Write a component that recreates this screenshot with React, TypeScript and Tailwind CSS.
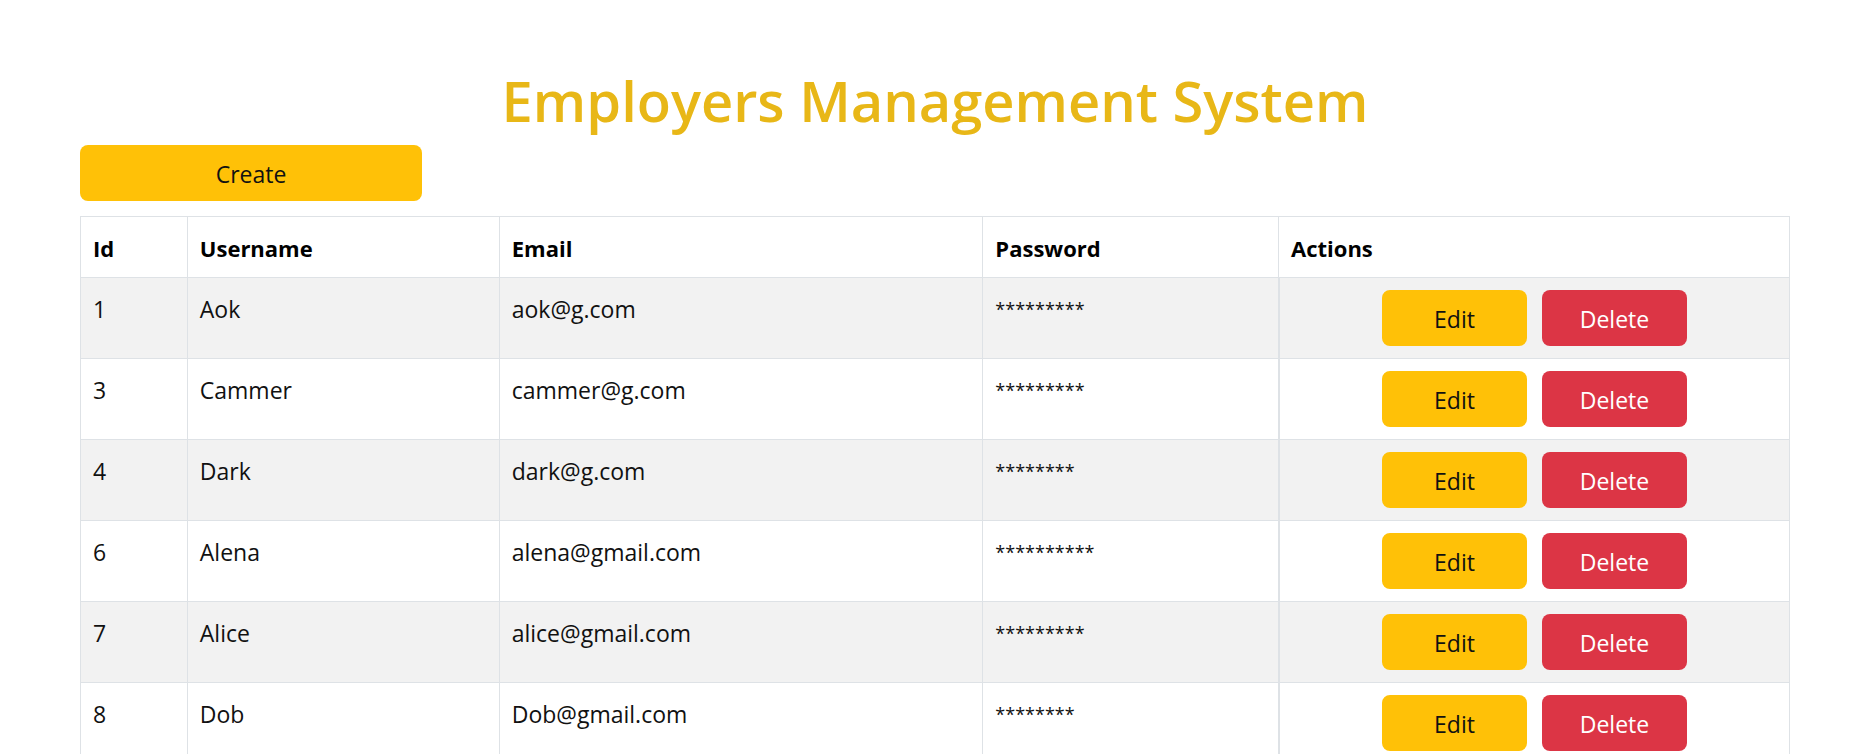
const employees = [
  { id: 1, username: "Aok", email: "aok@g.com", passwordLength: 9 },
  { id: 3, username: "Cammer", email: "cammer@g.com", passwordLength: 9 },
  { id: 4, username: "Dark", email: "dark@g.com", passwordLength: 8 },
  { id: 6, username: "Alena", email: "alena@gmail.com", passwordLength: 10 },
  { id: 7, username: "Alice", email: "alice@gmail.com", passwordLength: 9 },
  { id: 8, username: "Dob", email: "Dob@gmail.com", passwordLength: 8 },
];

const columns = [
  { label: "Id", width: "w-[6.25%]" },
  { label: "Username", width: "w-[18.25%]" },
  { label: "Email", width: "w-[28.3%]" },
  { label: "Password", width: "w-[17.3%]" },
  { label: "Actions", width: "w-[29.9%]" },
];

const border = "border-r border-b border-[#dee2e6]";
const cell = `${border} px-3 pt-[13px] pb-[11px] text-left align-top`;
const button = "rounded-lg pt-[11px] pb-[9px] text-center cursor-pointer";

export default function App() {
  return (
    <div className="h-screen overflow-hidden bg-white">
      <main className="pt-16 pr-[65px] pl-20 font-['Open_Sans','Noto_Sans',sans-serif] text-[23px] leading-9 text-[#111111]">
        <h1 className="mb-[9px] text-center text-[56px] leading-[72px] font-semibold text-[#e8b717]">
          Employers Management System
        </h1>
        <button type="button" className={`${button} mb-[15px] block w-1/5 bg-[#ffc107]`}>
          Create
        </button>
        <table className="w-full table-fixed border-separate border-spacing-0 border-t border-l border-[#dee2e6]">
          <thead className="text-[22px] text-black">
            <tr>
              {columns.map((column) => (
                <th key={column.label} scope="col" className={`${cell} ${column.width} font-bold`}>
                  {column.label}
                </th>
              ))}
            </tr>
          </thead>
          <tbody>
            {employees.map((employee) => (
              <tr key={employee.id} className="odd:bg-[#f2f2f2]">
                <td className={cell}>{employee.id}</td>
                <td className={cell}>{employee.username}</td>
                <td className={cell}>{employee.email}</td>
                <td className={`${cell} text-[18px]`}>{"*".repeat(employee.passwordLength)}</td>
                <td className={`${border} border-l p-3`}>
                  <div className="flex justify-center gap-[15px]">
                    <button type="button" className={`${button} w-[145px] bg-[#ffc107]`}>
                      Edit
                    </button>
                    <button type="button" className={`${button} w-[145px] bg-[#dc3545] text-white`}>
                      Delete
                    </button>
                  </div>
                </td>
              </tr>
            ))}
          </tbody>
        </table>
      </main>
    </div>
  );
}
